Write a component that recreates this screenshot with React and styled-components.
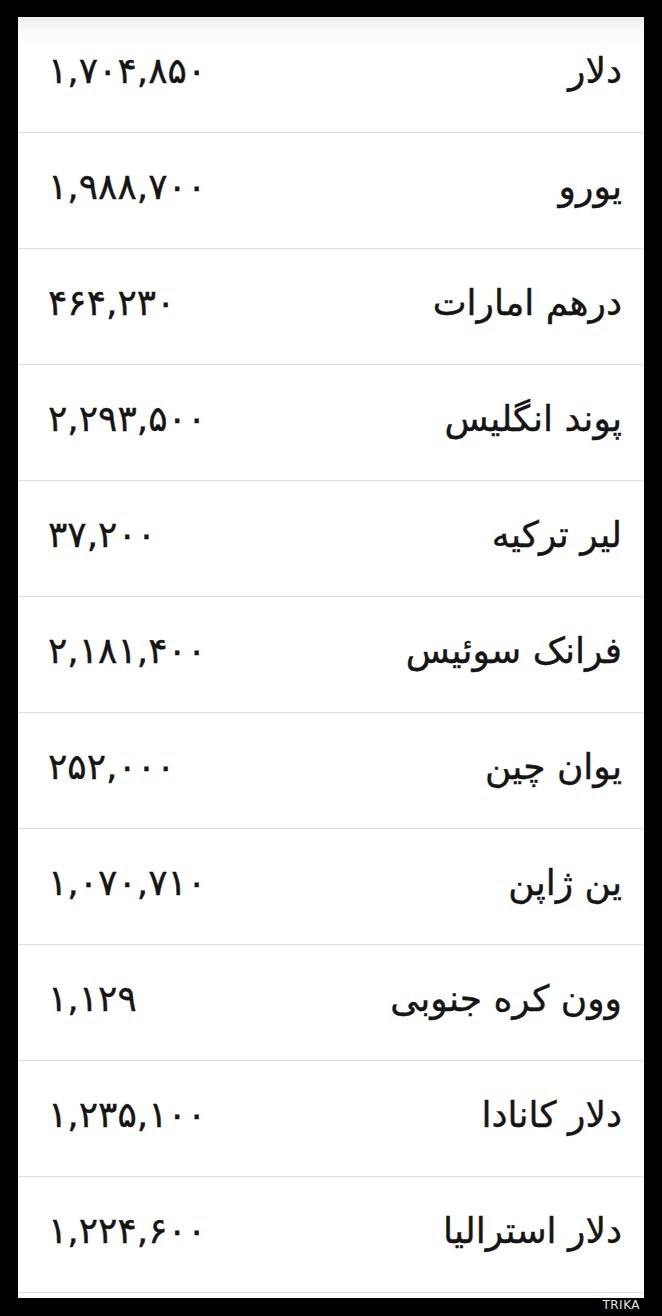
import React from 'react';
import styled, { createGlobalStyle } from 'styled-components';

const GlobalStyle = createGlobalStyle`
  html, body {
    margin: 0;
    padding: 0;
    background: #000;
  }
  body {
    font-family: "DejaVu Sans", "Noto Sans", sans-serif;
  }
`;

const Page = styled.div`
  width: 662px;
  min-height: 1316px;
  background: #000;
  padding: 17px 18px 0 18px;
  box-sizing: border-box;
  position: relative;
`;

const Card = styled.div`
  width: 626px;
  background: linear-gradient(to bottom, #ececec 0px, #fafafa 14px, #fff 28px, #fff 100%);
  padding-bottom: 5px;
  direction: rtl;
`;

const Row = styled.div`
  height: 115px;
  border-bottom: 1px solid #dedede;
  display: flex;
  align-items: center;
  justify-content: space-between;
  padding: 0 22px 0 30px;
  box-sizing: content-box;
`;

const Name = styled.span`
  font-size: 36px;
  color: #151515;
  line-height: 1;
  padding-bottom: 8px;
  -webkit-text-stroke: 0.4px #151515;
`;

const Value = styled.span`
  direction: ltr;
  font-size: 36px;
  letter-spacing: 0.5px;
  color: #151515;
  line-height: 1;
  padding-bottom: 8px;
  -webkit-text-stroke: 0.4px #151515;
`;

const Watermark = styled.span`
  position: absolute;
  right: 22px;
  bottom: 4px;
  font-family: "DejaVu Sans", sans-serif;
  font-size: 12px;
  color: #e6e6e6;
  letter-spacing: 0.5px;
`;

const rates = [
  ['دلار', '۱,۷۰۴,۸۵۰'],
  ['یورو', '۱,۹۸۸,۷۰۰'],
  ['درهم امارات', '۴۶۴,۲۳۰'],
  ['پوند انگلیس', '۲,۲۹۳,۵۰۰'],
  ['لیر ترکیه', '۳۷,۲۰۰'],
  ['فرانک سوئیس', '۲,۱۸۱,۴۰۰'],
  ['یوان چین', '۲۵۲,۰۰۰'],
  ['ین ژاپن', '۱,۰۷۰,۷۱۰'],
  ['وون کره جنوبی', '۱,۱۲۹'],
  ['دلار کانادا', '۱,۲۳۵,۱۰۰'],
  ['دلار استرالیا', '۱,۲۲۴,۶۰۰'],
];

export default function App() {
  return (
    <Page>
      <GlobalStyle />
      <Card>
        {rates.map(([name, value]) => (
          <Row key={name}>
            <Name>{name}</Name>
            <Value>{value}</Value>
          </Row>
        ))}
      </Card>
      <Watermark>TRIKA</Watermark>
    </Page>
  );
}
